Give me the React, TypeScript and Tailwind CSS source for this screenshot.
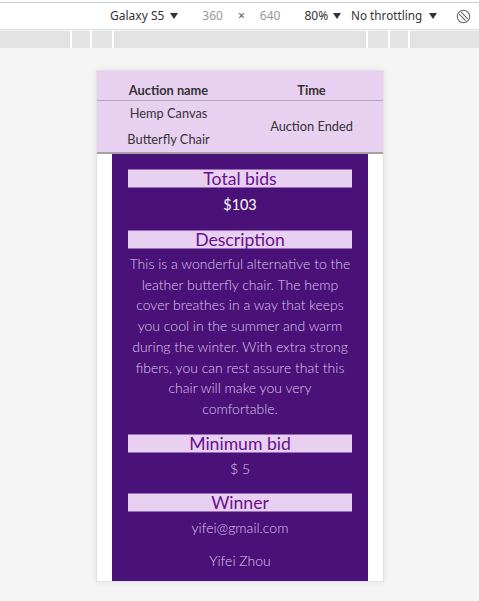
import React from 'react';

const Caret = ({ className = '' }: { className?: string }) => (
  <svg width="8" height="6" viewBox="0 0 8 6" className={className}>
    <path d="M0 0 H8 L4 6 Z" fill="#333" />
  </svg>
);

const Section = ({ title }: { title: string }) => (
  <div className="h-[19px] bg-[#e8d0f0] border-y border-[#9a6cbc] flex items-center justify-center text-[17.6px] leading-[17px] text-[#68118f]">
    {title}
  </div>
);

export default function App() {
  return (
    <div className="w-[479px] h-[601px] overflow-hidden bg-[#f4f4f4] flex flex-col" style={{ fontFamily: 'Lato, sans-serif' }}>
      {/* devtools toolbar */}
      <div className="h-[2px] bg-white shrink-0" />
      <div className="h-[28px] shrink-0 bg-white border-t border-[#cfcfcf] border-b border-b-[#e0e0e0] flex items-center text-[12px] text-[#333]" style={{ fontFamily: '"Noto Sans", sans-serif' }}>
        <span className="ml-[110px]">Galaxy S5</span>
        <Caret className="ml-[6px]" />
        <span className="ml-[24px] text-[#999]">360</span>
        <span className="ml-[15px] text-[#555]">×</span>
        <span className="ml-[15px] text-[#999]">640</span>
        <span className="ml-[24px]">80%</span>
        <Caret className="ml-[5px]" />
        <span className="ml-[10px] text-[11.7px]">No throttling</span>
        <Caret className="ml-[7px]" />
        <svg width="15" height="15" viewBox="0 0 15 15" className="ml-[19px]">
          <circle cx="7.5" cy="7.5" r="6.2" fill="none" stroke="#666" strokeWidth="1.1" />
          <path d="M3.2 5.2 L9.8 11.8 M5.2 3.2 L11.8 9.8" stroke="#666" strokeWidth="1.1" />
        </svg>
      </div>
      <div className="h-[17px] shrink-0 mt-[1px] bg-[#e3e3e3] flex">
        <div className="ml-[70px] w-[2px] bg-white" />
        <div className="ml-[18px] w-[2px] bg-white" />
        <div className="ml-[20px] w-[2px] bg-white" />
        <div className="ml-[252px] w-[2px] bg-white" />
        <div className="ml-[20px] w-[2px] bg-white" />
        <div className="ml-[18px] w-[2px] bg-white" />
      </div>

      {/* device viewport */}
      <div className="flex-1 bg-[#f5f5f5] pt-[22px]">
        <div className="ml-[96px] w-[288px] h-[512px] bg-white border border-[#e2e2e2] shadow-[0_0_8px_rgba(0,0,0,0.08)] overflow-hidden flex flex-col text-[#333]">
          <div className="bg-[#e8d0f0] shrink-0">
            <div className="grid grid-cols-2 h-[30px] items-center pt-[9px] text-[12.8px] leading-[18px] font-bold text-center border-b border-[#b3a9ba]">
              <div>Auction name</div>
              <div>Time</div>
            </div>
            <div className="grid grid-cols-2 h-[53px] items-center text-[12.8px] leading-[25.6px] text-center border-b-2 border-[#a7a2aa]">
              <div className="px-[20px]">Hemp Canvas Butterfly Chair</div>
              <div>Auction Ended</div>
            </div>
          </div>

          <div className="ml-[15px] w-[256px] flex-1 bg-[#4a1178] px-[16px] pt-[15px] text-center">
            <Section title="Total bids" />
            <p className="mt-[6px] mb-[14px] text-[14.4px] leading-[22px] text-white">$103</p>
            <Section title="Description" />
            <p className="mt-[5px] mb-[14px] text-[14px] leading-[20.7px] font-light text-[#dcc6ec]">
              This is a wonderful alternative to the leather butterfly chair. The hemp cover breathes in a way that keeps you cool in the summer and warm during the winter. With extra strong fibers, you can rest assure that this chair will make you very<br />comfortable.
            </p>
            <Section title="Minimum bid" />
            <p className="mt-[5px] mb-[13px] text-[14px] leading-[22px] font-light text-[#dcc6ec]">$ 5</p>
            <Section title="Winner" />
            <p className="mt-[5px] text-[14px] leading-[22px] font-light text-[#dcc6ec]">yifei@gmail.com</p>
            <p className="mt-[11px] text-[14px] leading-[22px] font-light text-[#dcc6ec]">Yifei Zhou</p>
          </div>
        </div>
      </div>
    </div>
  );
}
